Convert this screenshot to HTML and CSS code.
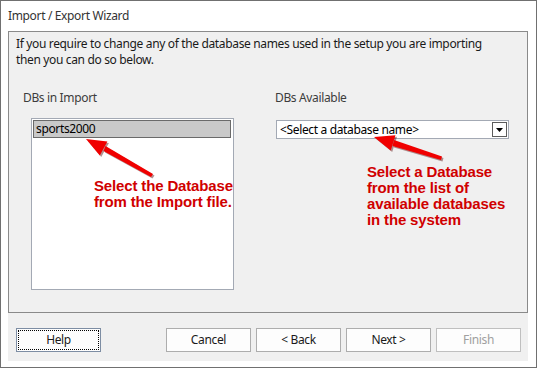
FILE: index.html
```html
<!DOCTYPE html>
<html lang="en">
<head>
    <meta charset="UTF-8">
    <title>Import / Export Wizard</title>
    <link rel="stylesheet" href="styles.css">
</head>
<body>
    <div class="window">
        <div class="titlebar">Import / Export Wizard</div>
        <div class="frame">
            <div class="content">
                <div class="panel">
                    <p class="intro">
                        <span class="intro-line">If you require to change any of the database names used in the setup you are importing</span>
                        <span class="intro-line">then you can do so below.</span>
                    </p>
                    <div class="columns">
                        <div class="col col-import">
                            <div class="label">DBs in Import</div>
                            <div class="listbox">
                                <div class="item selected">sports2000</div>
                            </div>
                        </div>
                        <div class="col col-available">
                            <div class="label">DBs Available</div>
                            <div class="combo">
                                <span class="combo-text">&lt;Select a database name&gt;</span>
                                <span class="drop">
                                    <svg width="7" height="4" viewBox="0 0 7 4"><path d="M0 0H7L3.5 4Z" fill="#000"/></svg>
                                </span>
                            </div>
                        </div>
                    </div>
                </div>
                <div class="buttons">
                    <button class="btn help">Help</button>
                    <span class="spacer"></span>
                    <button class="btn">Cancel</button>
                    <button class="btn">&lt; Back</button>
                    <button class="btn">Next &gt;</button>
                    <button class="btn disabled">Finish</button>
                </div>
            </div>
        </div>

        <!-- annotation overlay -->
        <svg class="arrows" width="537" height="368" viewBox="0 0 537 368">
            <g fill="#5a1010" opacity="0.45" transform="translate(1.5 1.5)">
                <polygon points="153,174 151,177 103.5,151 105.5,146"/>
                <polygon points="86,139 107.4,141.6 99.8,155.6"/>
                <polygon points="442,156.5 441,160 392.5,146 394,140"/>
                <polygon points="374,137 395.5,135.3 390.7,150.5"/>
            </g>
            <g fill="#f00000">
                <polygon points="153,174 151,177 103.5,151 105.5,146"/>
                <polygon points="86,139 107.4,141.6 99.8,155.6"/>
                <polygon points="442,156.5 441,160 392.5,146 394,140"/>
                <polygon points="374,137 395.5,135.3 390.7,150.5"/>
            </g>
        </svg>
        <div class="note note-left">Select the Database<br>from the Import file.</div>
        <div class="note note-right">Select a Database<br>from the list of<br>available databases<br>in the system</div>
    </div>
</body>
</html>
```

FILE: styles.css
```css
body {
    margin: 0;
    padding: 0;
    background: #fff;
    font-family: "Segoe UI", "Noto Sans", sans-serif;
    font-size: 12px;
    letter-spacing: -0.35px;
    color: #1a1a1a;
}
.window {
    position: relative;
    width: 537px;
    height: 368px;
    box-sizing: border-box;
    border: 1px solid #707070;
    background: #fff;
}
.titlebar {
    height: 30px;
    line-height: 30px;
    padding-left: 7px;
    color: #333;
}
.frame {
    padding: 0 8px 6px 7px;
}
.content {
    height: 330px;
    background: #f0f0f0;
    display: flex;
    flex-direction: column;
}
.panel {
    height: 282px;
    box-sizing: border-box;
    border: 1px solid #8a8a8a;
    padding: 4px 7px 0 7px;
}
.intro {
    margin: 0;
}
.intro-line {
    display: block;
    line-height: 16px;
}
.columns {
    display: flex;
    margin-top: 22px;
    padding-left: 7px;
}
.label {
    line-height: 15px;
    color: #3c3c3c;
}
.col-import {
    width: 252px;
}
.col-available {
    flex: 1;
}
.listbox {
    margin: 13px 0 0 8px;
    width: 203px;
    height: 172px;
    box-sizing: border-box;
    border: 1px solid #a3a9b4;
    background: #fff;
    padding: 1px;
}
.item {
    height: 18px;
    line-height: 16px;
    padding-left: 2px;
    box-sizing: border-box;
    color: #000;
}
.item.selected {
    background: #c9c9c9;
    border: 1px solid #6a6a6a;
    margin-right: 1px;
}
.combo {
    margin: 15px 0 0 1px;
    width: 233px;
    height: 19px;
    box-sizing: border-box;
    border: 1px solid #a3a9b4;
    background: #fff;
    display: flex;
    align-items: center;
    justify-content: space-between;
    padding: 0 1px 0 3px;
}
.combo-text {
    color: #000;
    line-height: 17px;
}
.drop {
    width: 15px;
    height: 15px;
    box-sizing: border-box;
    border: 1px solid #5c5c5c;
    background: #fff;
    display: flex;
    align-items: center;
    justify-content: center;
}
.buttons {
    display: flex;
    gap: 5px;
    padding: 15px 7px 0 8px;
}
.spacer {
    flex: 1;
}
.btn {
    width: 85px;
    height: 24px;
    border: 1px solid #adadad;
    background: #fdfdfd;
    font-family: inherit;
    font-size: 12px;
    letter-spacing: -0.35px;
    line-height: 20px;
    color: #1a1a1a;
    padding: 0 0 1px 0;
}
.btn.help {
    border-color: #7d8da3;
    outline: 1px dotted #000;
    outline-offset: -3px;
}
.btn.disabled {
    color: #a0a0a0;
    border-color: #bfbfbf;
}
.arrows {
    position: absolute;
    left: -1px;
    top: -1px;
}
.note {
    position: absolute;
    font-family: "Liberation Sans", Arial, sans-serif;
    font-weight: bold;
    font-size: 15px;
    line-height: 16px;
    letter-spacing: -0.15px;
    color: #d00000;
}
.note-left {
    left: 93px;
    top: 177px;
}
.note-right {
    left: 366px;
    top: 163px;
}
```
